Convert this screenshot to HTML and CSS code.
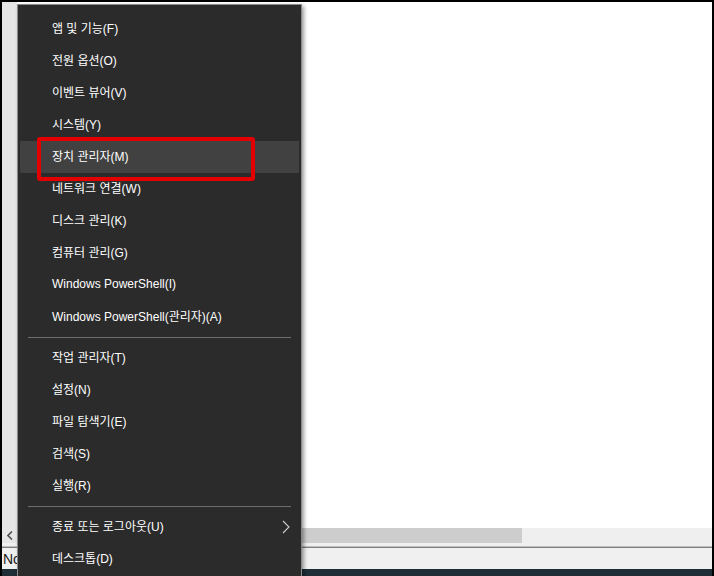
FILE: index.html
```html
<!DOCTYPE html>
<html lang="ko">
<head>
<meta charset="utf-8">
<title>Win+X 메뉴</title>
<link rel="stylesheet" href="styles.css">
</head>
<body>
<div class="screen">
  <div class="content">
    <div class="gutter"></div>
    <div class="canvas"></div>
  </div>
  <div class="hscroll">
    <div class="arrow-btn">
      <svg width="6" height="9" viewBox="0 0 6 9"><polyline points="5,0.5 1,4.5 5,8.5" fill="none" stroke="#505050" stroke-width="1.6"/></svg>
    </div>
    <div class="thumb"></div>
    <div class="track"></div>
  </div>
  <div class="statusgap"></div>
  <div class="statusbar"><span class="status-text">No</span></div>
  <div class="taskbar"></div>

  <div class="menu">
    <div class="item">앱 및 기능(F)</div>
    <div class="item">전원 옵션(O)</div>
    <div class="item">이벤트 뷰어(V)</div>
    <div class="item">시스템(Y)</div>
    <div class="item active">장치 관리자(M)</div>
    <div class="item">네트워크 연결(W)</div>
    <div class="item">디스크 관리(K)</div>
    <div class="item">컴퓨터 관리(G)</div>
    <div class="item">Windows PowerShell(I)</div>
    <div class="item">Windows PowerShell(관리자)(A)</div>
    <div class="sep"></div>
    <div class="item">작업 관리자(T)</div>
    <div class="item">설정(N)</div>
    <div class="item">파일 탐색기(E)</div>
    <div class="item">검색(S)</div>
    <div class="item">실행(R)</div>
    <div class="sep"></div>
    <div class="item">종료 또는 로그아웃(U)
      <svg class="chev" width="8" height="14" viewBox="0 0 8 14"><polyline points="1,1 7,7 1,13" fill="none" stroke="#cfcfcf" stroke-width="1.1"/></svg>
    </div>
    <div class="item">데스크톱(D)</div>
  </div>

  <div class="redbox"></div>
</div>
</body>
</html>
```

FILE: styles.css
```css
html, body {
  margin: 0;
  padding: 0;
  background: #000;
  width: 714px;
  height: 576px;
  overflow: hidden;
}

.screen {
  position: relative;
  width: 710px;
  height: 574px;
  padding: 2px 2px 0 2px;
  display: flex;
  flex-direction: column;
  font-family: "Liberation Sans", "Noto Sans CJK KR", sans-serif;
}

.content {
  flex: 1;
  display: flex;
  min-height: 0;
}

.gutter {
  width: 15px;
  background: #e5e5e5;
}

.canvas {
  flex: 1;
  background: #ffffff;
}

.hscroll {
  height: 15px;
  display: flex;
  background: #efefef;
}

.arrow-btn {
  width: 15px;
  background: #e6e6e6;
  display: flex;
  align-items: center;
  justify-content: center;
}

.thumb {
  width: 505px;
  background: #cdcdcd;
}

.track {
  flex: 1;
  background: #efefef;
}

.statusgap {
  height: 3px;
  background: #f0f0f0;
  border-bottom: 1px solid #bdbdbd;
}

.statusbar {
  height: 21px;
  background: #f0f0f0;
  border-top: 1px solid #808080;
  display: flex;
  align-items: center;
}

.status-text {
  font-family: "Liberation Sans", Arial, sans-serif;
  font-size: 14px;
  color: #1a1a1a;
  padding-left: 1px;
}

.taskbar {
  height: 7px;
  background: #1e2d36;
}

.menu {
  position: absolute;
  left: 17px;
  top: 4px;
  width: 283px;
  height: 600px;
  background: #2b2b2b;
  border: 1px solid #8a8a8a;
  box-shadow: 2px 2px 4px rgba(0, 0, 0, 0.4);
  padding-top: 8px;
  box-sizing: content-box;
}

.item {
  height: 32px;
  margin: 0 2px;
  padding: 0 9px 3px 32px;
  box-sizing: border-box;
  display: flex;
  align-items: center;
  font-size: 12px;
  color: #ffffff;
  white-space: nowrap;
}

.item.active {
  background: #414141;
}

.chev {
  margin-left: auto;
  margin-top: 2px;
}

.sep {
  height: 1px;
  margin: 4px 10px;
  background: #6e6e6e;
}

.redbox {
  position: absolute;
  left: 37px;
  top: 137px;
  width: 210px;
  height: 36px;
  border: 4px solid #e30000;
  border-radius: 3px;
}
```
